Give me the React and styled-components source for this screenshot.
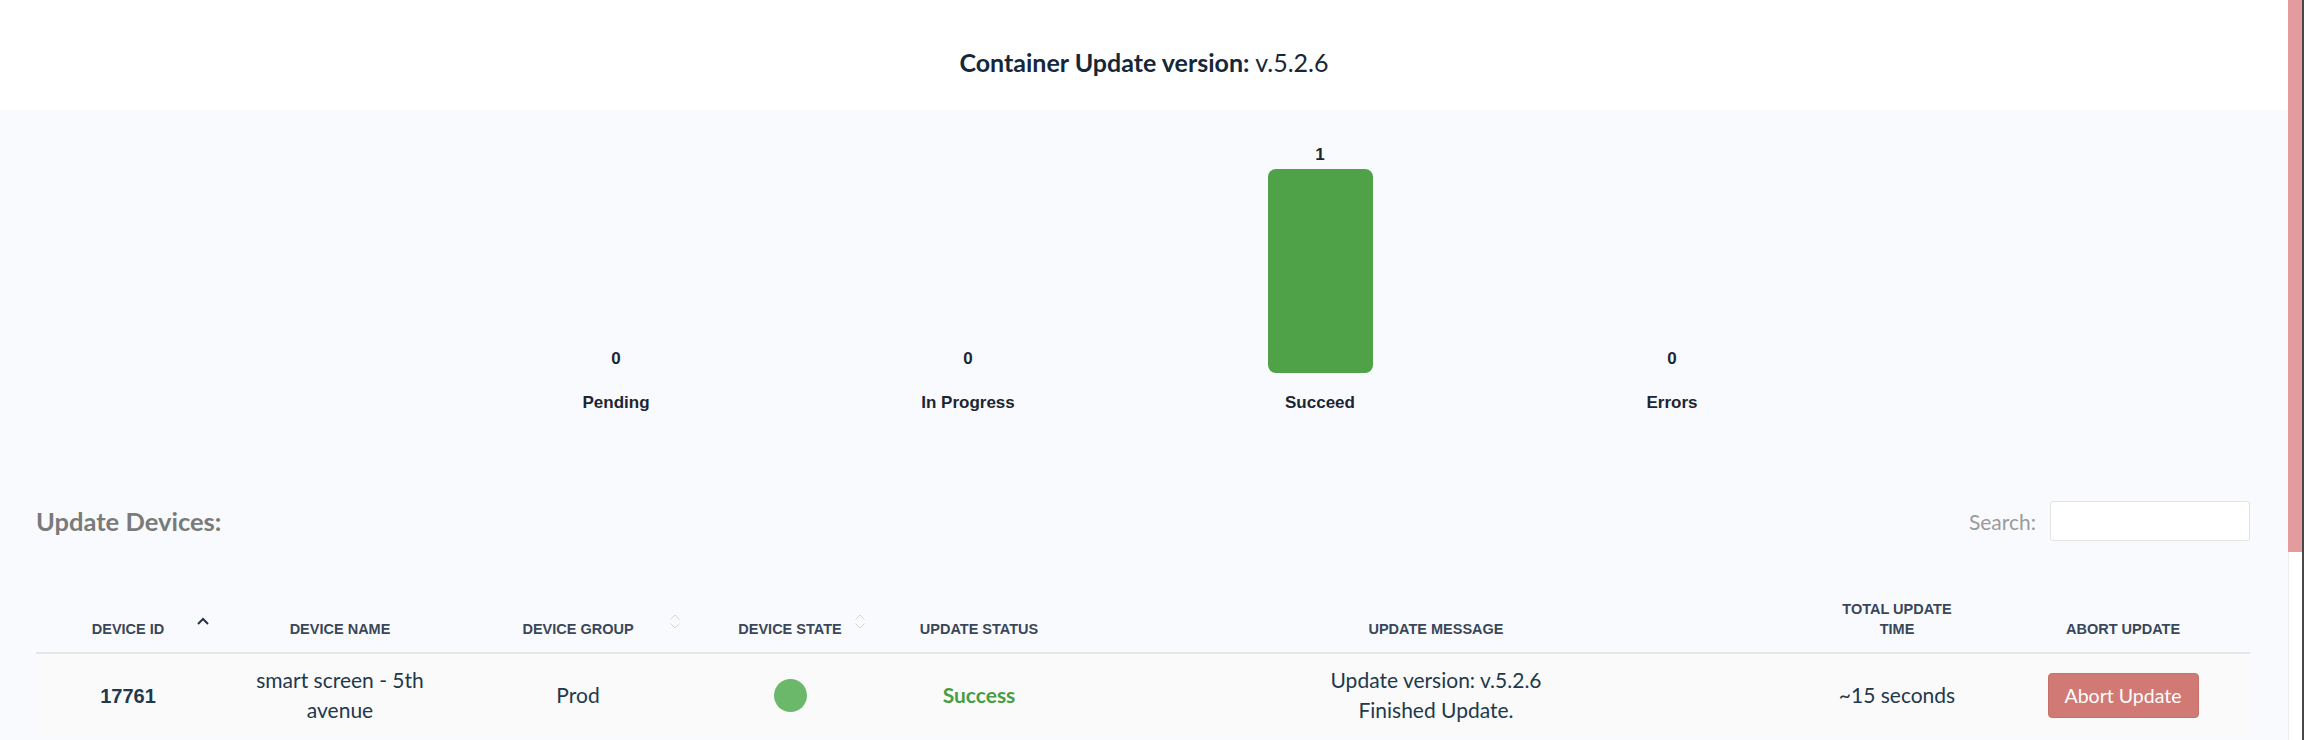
import React from "react";
import styled, { createGlobalStyle } from "styled-components";

const GlobalStyle = createGlobalStyle`
  html, body { margin: 0; padding: 0; }
  body {
    background: #f9fafd;
    font-family: Lato, "Open Sans", sans-serif;
    overflow: hidden;
  }
`;

const Frame = styled.div`
  display: flex;
  height: 740px;
  overflow: hidden;
`;

const Main = styled.main`
  flex: 1;
  min-width: 0;
  display: flex;
  flex-direction: column;
`;

const Scrollbar = styled.div`
  width: 14px;
  display: flex;
  flex-direction: column;
  background: #ffffff;
  box-shadow: inset 1px 0 0 #ededed;
  border-right: 2px solid #474747;
`;

const Thumb = styled.div`
  height: 552px;
  background: #e39b9e;
`;

const Header = styled.header`
  height: 110px;
  box-sizing: border-box;
  padding-top: 48px;
  background: #ffffff;
  text-align: center;
  font-size: 25px;
  line-height: 28px;
  color: #15283a;
`;

const Strong = styled.strong`
  font-weight: 700;
`;

const ChartRow = styled.section`
  display: flex;
  justify-content: center;
  padding-top: 35px;
`;

const ChartColumn = styled.div`
  width: 352px;
  display: flex;
  flex-direction: column;
  align-items: center;
  font-family: "Liberation Sans", Arial, sans-serif;
  font-weight: 700;
  color: #1c2632;
`;

const BarArea = styled.div`
  height: 228px;
  display: flex;
  flex-direction: column;
  justify-content: flex-end;
  align-items: center;
  gap: 4px;
`;

const Value = styled.div`
  font-size: 17px;
  line-height: 20px;
`;

const Bar = styled.div`
  width: 105px;
  border-radius: 8px;
  background: #4fa247;
`;

const ChartLabel = styled.div`
  margin-top: 20px;
  font-size: 17px;
  line-height: 20px;
`;

const Toolbar = styled.div`
  display: flex;
  justify-content: space-between;
  align-items: center;
  margin: 88px 38px 0 36px;
  height: 40px;
`;

const SectionTitle = styled.h2`
  margin: 0;
  font-size: 25.5px;
  font-weight: 700;
  color: #7a7a7a;
`;

const SearchBox = styled.label`
  display: flex;
  align-items: center;
  gap: 14px;
  font-size: 21px;
  color: #9a9a9a;
`;

const SearchInput = styled.input`
  width: 200px;
  height: 40px;
  box-sizing: border-box;
  border: 1px solid #e3e3e3;
  border-radius: 3px;
  background: #ffffff;
  outline: none;
`;

const Table = styled.table`
  margin: 48px 38px 0 36px;
  width: 2214px;
  table-layout: fixed;
  border-collapse: collapse;
`;

const Th = styled.th`
  position: relative;
  padding: 10px 8px 13px;
  vertical-align: bottom;
  text-align: center;
  font-family: "Liberation Sans", Arial, sans-serif;
  font-size: 14.5px;
  line-height: 20px;
  font-weight: 700;
  text-transform: uppercase;
  color: #3a4759;
  border-bottom: 2px solid #e6e6e6;
`;

const Td = styled.td`
  padding: 11px 8px;
  vertical-align: middle;
  text-align: center;
  font-size: 21px;
  line-height: 30px;
  color: #22384c;
  background: #fafafa;
`;

const DeviceId = styled.span`
  font-family: "Liberation Sans", Arial, sans-serif;
  font-weight: 700;
  font-size: 20px;
  color: #22384c;
`;

const NameText = styled.span`
  display: inline-block;
  max-width: 200px;
`;

const Line = styled.span`
  display: block;
`;

const StateDot = styled.span`
  display: inline-block;
  width: 33px;
  height: 33px;
  border-radius: 50%;
  background: ${(p) => p.$color};
  vertical-align: middle;
`;

const Status = styled.span`
  font-weight: 700;
  color: ${(p) => p.$color};
`;

const AbortButton = styled.button`
  width: 151px;
  height: 45px;
  padding: 0;
  border: 1px solid #c9706b;
  border-radius: 4px;
  background: #d17a75;
  color: #ffffff;
  font-family: Lato, "Open Sans", sans-serif;
  font-size: 19.5px;
  cursor: pointer;
`;

const SortMark = styled.svg`
  position: absolute;
  right: ${(p) => p.$right}px;
  bottom: ${(p) => p.$bottom}px;
`;

function SortIcon({ active, right }) {
  if (active) {
    return (
      <SortMark $right={right} $bottom={27} width="14" height="8" viewBox="0 0 14 8">
        <path d="M2 7 L7 2 L12 7" fill="none" stroke="#2a3442" strokeWidth="2" />
      </SortMark>
    );
  }
  return (
    <SortMark $right={right} $bottom={22} width="12" height="17" viewBox="0 0 12 17">
      <path d="M1.5 6.5 L6 2 L10.5 6.5" fill="none" stroke="#d3d6dc" strokeWidth="1" />
      <path d="M1.5 10.5 L6 15 L10.5 10.5" fill="none" stroke="#d3d6dc" strokeWidth="1" />
    </SortMark>
  );
}

const chartData = [
  { label: "Pending", value: 0 },
  { label: "In Progress", value: 0 },
  { label: "Succeed", value: 1 },
  { label: "Errors", value: 0 },
];

const columns = [
  { key: "id", title: "Device ID", width: 184, sort: { active: true, right: 10 } },
  { key: "name", title: "Device Name", width: 240 },
  { key: "group", title: "Device Group", width: 236, sort: { right: 15 } },
  { key: "state", title: "Device State", width: 188, sort: { right: 18 } },
  { key: "status", title: "Update Status", width: 190 },
  { key: "message", title: "Update Message", width: 724 },
  { key: "time", title: ["Total Update", "Time"], width: 198 },
  { key: "abort", title: "Abort Update", width: 254 },
];

export default function App() {
  const max = Math.max(...chartData.map((d) => d.value), 1);
  return (
    <>
      <GlobalStyle />
      <Frame>
        <Main>
          <Header>
            <Strong>Container Update version:</Strong> v.5.2.6
          </Header>

          <ChartRow>
            {chartData.map((d) => (
              <ChartColumn key={d.label}>
                <BarArea>
                  <Value>{d.value}</Value>
                  <Bar style={{ height: `${(d.value / max) * 204}px` }} />
                </BarArea>
                <ChartLabel>{d.label}</ChartLabel>
              </ChartColumn>
            ))}
          </ChartRow>

          <Toolbar>
            <SectionTitle>Update Devices:</SectionTitle>
            <SearchBox>
              Search:
              <SearchInput type="search" />
            </SearchBox>
          </Toolbar>

          <Table>
            <colgroup>
              {columns.map((c) => (
                <col key={c.key} style={{ width: `${c.width}px` }} />
              ))}
            </colgroup>
            <thead>
              <tr>
                {columns.map((c) => (
                  <Th key={c.key}>
                    {Array.isArray(c.title)
                      ? c.title.map((t) => <Line key={t}>{t}</Line>)
                      : c.title}
                    {c.sort && <SortIcon active={c.sort.active} right={c.sort.right} />}
                  </Th>
                ))}
              </tr>
            </thead>
            <tbody>
              <tr>
                <Td>
                  <DeviceId>17761</DeviceId>
                </Td>
                <Td>
                  <NameText>smart screen - 5th avenue</NameText>
                </Td>
                <Td>Prod</Td>
                <Td>
                  <StateDot $color="#6cb86a" />
                </Td>
                <Td>
                  <Status $color="#4a9e3f">Success</Status>
                </Td>
                <Td>
                  <Line>Update version: v.5.2.6</Line>
                  <Line>Finished Update.</Line>
                </Td>
                <Td>~15 seconds</Td>
                <Td>
                  <AbortButton type="button">Abort Update</AbortButton>
                </Td>
              </tr>
            </tbody>
          </Table>
        </Main>
        <Scrollbar>
          <Thumb />
        </Scrollbar>
      </Frame>
    </>
  );
}
